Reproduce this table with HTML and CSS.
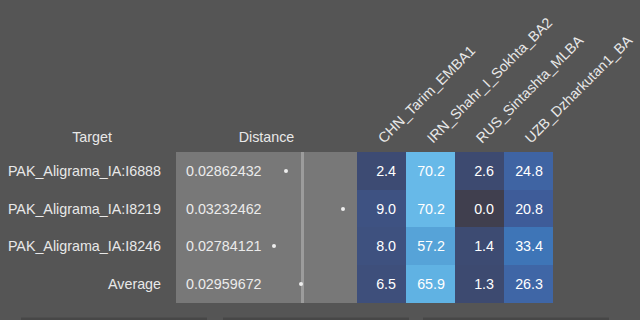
FILE: index.html
```html
<!DOCTYPE html>
<html>
<head>
<meta charset="utf-8">
<link rel="stylesheet" href="styles.css">
</head>
<body>
<div class="table">
  <div class="hd hd-target">Target</div>
  <div class="hd hd-dist">Distance</div>
  <div class="hd hd-col"><span class="rot">CHN_Tarim_EMBA1</span></div>
  <div class="hd hd-col"><span class="rot">IRN_Shahr_I_Sokhta_BA2</span></div>
  <div class="hd hd-col"><span class="rot">RUS_Sintashta_MLBA</span></div>
  <div class="hd hd-col"><span class="rot">UZB_Dzharkutan1_BA</span></div>

  <div class="dist-bg"><div class="avg-line" style="left:125px"></div></div>

  <div class="label r1">PAK_Aligrama_IA:I6888</div>
  <div class="dist r1">0.02862432<span class="dot" style="left:110px"></span></div>
  <div class="cell r1" style="background:#3d4b73">2.4</div>
  <div class="cell r1" style="background:#67b9e8">70.2</div>
  <div class="cell r1" style="background:#3d4a70">2.6</div>
  <div class="cell r1" style="background:#3f64a3">24.8</div>

  <div class="label r2">PAK_Aligrama_IA:I8219</div>
  <div class="dist r2">0.03232462<span class="dot" style="left:167px"></span></div>
  <div class="cell r2" style="background:#3e5282">9.0</div>
  <div class="cell r2" style="background:#67b9e8">70.2</div>
  <div class="cell r2" style="background:#403f4e">0.0</div>
  <div class="cell r2" style="background:#3e5c99">20.8</div>

  <div class="label r3">PAK_Aligrama_IA:I8246</div>
  <div class="dist r3">0.02784121<span class="dot" style="left:98px"></span></div>
  <div class="cell r3" style="background:#3e517f">8.0</div>
  <div class="cell r3" style="background:#56a3d8">57.2</div>
  <div class="cell r3" style="background:#3d4b72">1.4</div>
  <div class="cell r3" style="background:#3e75b7">33.4</div>

  <div class="label r4">Average</div>
  <div class="dist r4">0.02959672<span class="dot" style="left:125px"></span></div>
  <div class="cell r4" style="background:#3e4f7b">6.5</div>
  <div class="cell r4" style="background:#60b2e3">65.9</div>
  <div class="cell r4" style="background:#3d4a70">1.3</div>
  <div class="cell r4" style="background:#3f66a6">26.3</div>
</div>
<div class="footer">
  <div class="bar b1"></div>
  <div class="bar b2"></div>
  <div class="bar b3"></div>
</div>
</body>
</html>
```
FILE: styles.css
```css
html, body {
  margin: 0;
  padding: 0;
  background: #555555;
  width: 640px;
  height: 320px;
  overflow: hidden;
  font-family: "Liberation Sans", Arial, sans-serif;
  font-size: 14.3px;
  color: #e8e8e8;
}

.table {
  margin-left: 8px;
  display: grid;
  grid-template-columns: 168px 181px repeat(4, 49px);
  grid-template-rows: 152px 38px 37px 38px 38px;
}

.hd {
  grid-row: 1;
  display: flex;
  align-items: flex-end;
  justify-content: center;
  padding-bottom: 7px;
  line-height: 16px;
  box-sizing: border-box;
}
.hd-target { grid-column: 1; }
.hd-dist { grid-column: 2; }
.hd-col {
  position: relative;
  padding: 0;
}
.rot {
  position: absolute;
  left: 29px;
  bottom: 6px;
  white-space: nowrap;
  line-height: 16px;
  transform-origin: 0 100%;
  transform: rotate(-45deg);
}

.dist-bg {
  grid-column: 2;
  grid-row: 2 / 6;
  background: #787878;
  position: relative;
}
.avg-line {
  position: absolute;
  top: 0;
  bottom: 0;
  width: 3px;
  background: #9c9c9c;
}

.r1 { grid-row: 2; }
.r2 { grid-row: 3; }
.r3 { grid-row: 4; }
.r4 { grid-row: 5; }

.label {
  grid-column: 1;
  display: flex;
  align-items: center;
  justify-content: flex-end;
  padding-right: 15px;
}

.dist {
  grid-column: 2;
  position: relative;
  display: flex;
  align-items: center;
  padding-left: 10px;
  color: #ebebeb;
}
.dot {
  position: absolute;
  top: 50%;
  width: 4px;
  height: 4px;
  margin: -2px 0 0 -2px;
  border-radius: 50%;
  background: #eeeeee;
}

.cell {
  display: flex;
  align-items: center;
  justify-content: flex-end;
  padding-right: 10px;
  color: #ffffff;
}

.footer {
  display: flex;
  margin-top: 14px;
  padding-left: 21px;
}
.bar {
  height: 6px;
  background: #474747;
  border-top: 1px solid #4e4e4e;
  box-sizing: border-box;
}
.b1 { width: 186px; }
.b2 { width: 186px; margin-left: 16px; }
.b3 { width: 186px; margin-left: 14px; }
```
